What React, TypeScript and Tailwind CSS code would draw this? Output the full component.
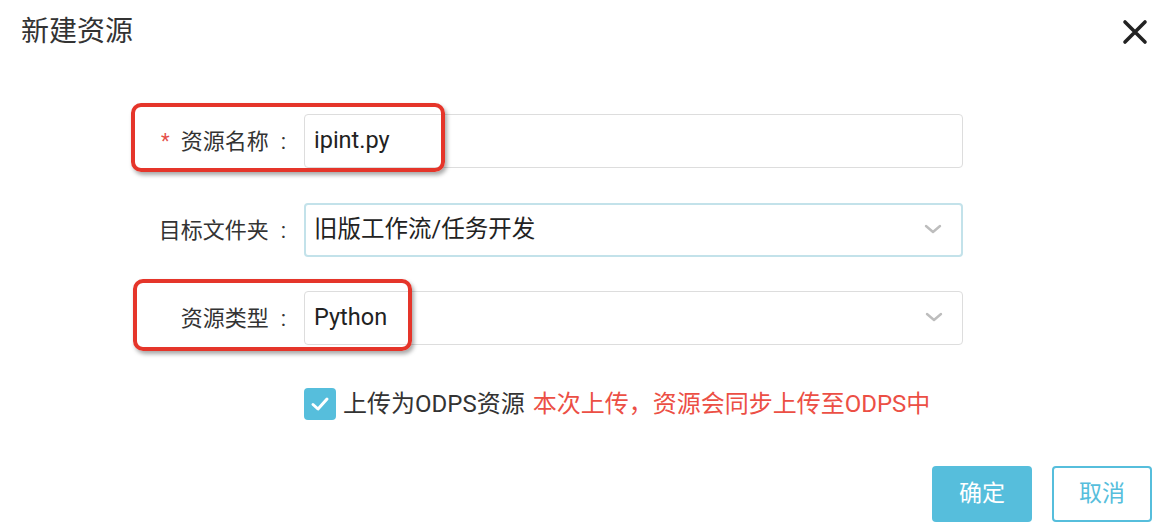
import React from "react";

const font = { fontFamily: "Roboto, 'Noto Sans CJK SC', 'Noto Sans', sans-serif" };

function Chevron() {
  return (
    <svg width="18" height="10" viewBox="0 0 18 10" className="mr-[19px] mt-[-2px]">
      <path d="M2 2 L9 8 L16 2" fill="none" stroke="#bdbdbd" strokeWidth="2.4" strokeLinecap="round" strokeLinejoin="round" />
    </svg>
  );
}

function Row({
  label,
  required,
  children,
  className,
}: {
  label: string;
  required?: boolean;
  children: React.ReactNode;
  className?: string;
}) {
  return (
    <div className={"relative flex items-center h-[54px] " + (className ?? "")}>
      <div className="w-[286px] flex items-center justify-end text-[22px] text-[#333]">
        {required && <span className="text-[#e5504a] mr-[11px] text-[20px]">*</span>}
        <span>{label}</span>
        <span className="ml-[12px]">:</span>
      </div>
      <div className="ml-[18px] w-[659px] h-[54px]">{children}</div>
    </div>
  );
}

export default function App() {
  return (
    <div className="w-[1164px] h-[532px] bg-white relative overflow-hidden" style={font}>
      <div className="flex items-center justify-between pl-[21px] pr-[16px] pt-[11px] h-[52px]">
        <div className="text-[28px] leading-[40px] text-[#333]">新建资源</div>
        <svg width="26" height="26" viewBox="0 0 26 26">
          <path d="M3 3 L23 23 M23 3 L3 23" stroke="#222" strokeWidth="3.6" strokeLinecap="round" />
        </svg>
      </div>

      <div className="mt-[62px]">
        <Row label="资源名称" required>
          <div className="h-full border border-[#dddddd] rounded-[4px] flex items-center pl-[9px] text-[23.5px] text-[#222]">
            ipint.py
          </div>
          <div className="absolute left-[131px] top-[-11px] w-[314px] h-[69px] border-[4px] border-[#e5352a] rounded-[10px] shadow-[2px_3px_4px_rgba(0,0,0,0.35)] pointer-events-none" />
        </Row>

        <Row label="目标文件夹" className="mt-[35px]">
          <div className="h-full border-2 border-[#c3e2ea] rounded-[4px] flex items-center justify-between pl-[8px] text-[23.5px] text-[#222]">
            <span>旧版工作流/任务开发</span>
            <Chevron />
          </div>
        </Row>

        <Row label="资源类型" className="mt-[34px]">
          <div className="h-full border border-[#dddddd] rounded-[4px] flex items-center justify-between pl-[9px] text-[23.5px] text-[#222]">
            <span>Python</span>
            <Chevron />
          </div>
          <div className="absolute left-[133px] top-[-12px] w-[279px] h-[72px] border-[4px] border-[#e5352a] rounded-[10px] shadow-[2px_3px_4px_rgba(0,0,0,0.35)] pointer-events-none" />
        </Row>

        <div className="flex items-center mt-[43px] pl-[304px] h-[32px]">
          <div className="w-[32px] h-[32px] rounded-[4px] bg-[#56bedc] flex items-center justify-center">
            <svg width="20" height="16" viewBox="0 0 20 16">
              <path d="M3 8.5 L8 13 L17 3" fill="none" stroke="white" strokeWidth="3" strokeLinecap="round" strokeLinejoin="round" />
            </svg>
          </div>
          <span className="ml-[7px] text-[24px] text-[#333]">上传为ODPS资源</span>
          <span className="ml-[8px] text-[24px] text-[#ec4f45]">本次上传，资源会同步上传至ODPS中</span>
        </div>
      </div>

      <div className="flex justify-end gap-[20px] pr-[12px] mt-[46px]">
        <button className="w-[100px] h-[56px] rounded-[4px] bg-[#56bedc] text-white text-[23px]">确定</button>
        <button className="w-[100px] h-[56px] rounded-[4px] border-2 border-[#56bedc] bg-white text-[#56bedc] text-[23px]">取消</button>
      </div>
    </div>
  );
}
